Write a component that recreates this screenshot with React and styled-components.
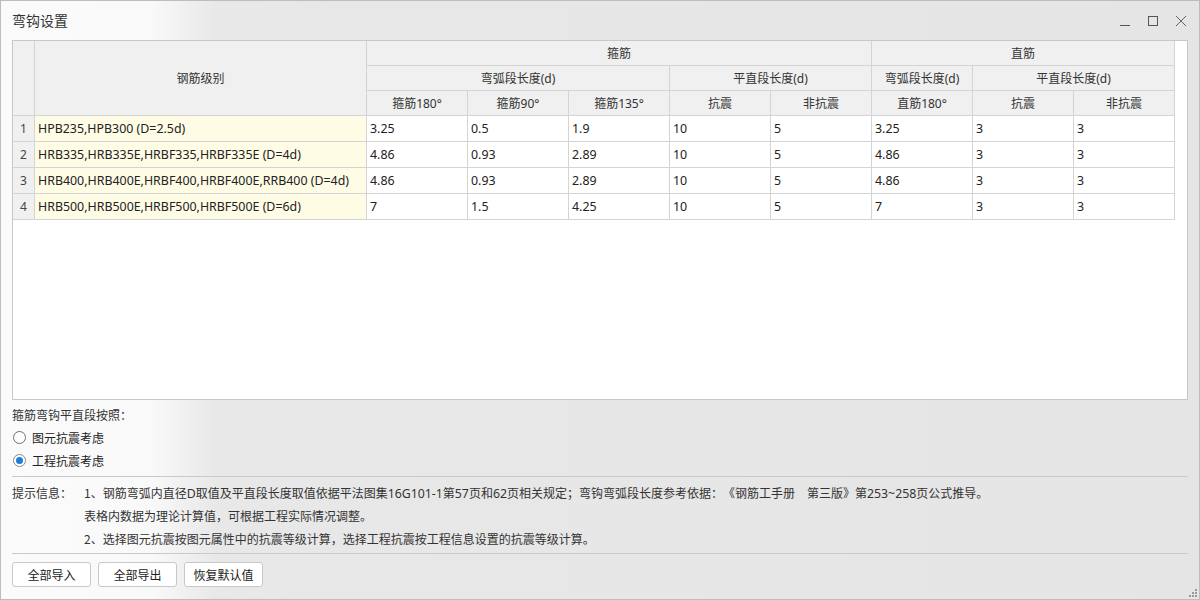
import React from "react";
import styled, { createGlobalStyle } from "styled-components";

const GlobalStyle = createGlobalStyle`
  html, body {
    margin: 0;
    padding: 0;
  }
  body {
    font-family: "Noto Sans", "Noto Sans CJK SC", sans-serif;
    font-size: 12px;
    color: #333;
    text-spacing-trim: space-all;
  }
`;

const Window = styled.div`
  position: relative;
  width: 1200px;
  height: 600px;
  box-sizing: border-box;
  border: 1px solid #bdbdbd;
  padding: 0 11px;
  display: flex;
  flex-direction: column;
  background: linear-gradient(
    90deg,
    #fbfbfb 0,
    #f9f9f9 150px,
    #e8e8e8 215px,
    #e5e5e5 100%
  );
`;

const TitleBar = styled.div`
  height: 39px;
  display: flex;
  align-items: center;
  justify-content: space-between;
`;

const Title = styled.div`
  font-family: "Noto Sans CJK SC", sans-serif;
  font-size: 14px;
  color: #333;
  margin-top: -2px;
`;

const WinControls = styled.div`
  display: flex;
  align-items: center;
  gap: 16px;
  margin-right: 1px;
  svg {
    display: block;
  }
`;

const TableBox = styled.div`
  height: 360px;
  box-sizing: border-box;
  border: 1px solid #c8c8c8;
  background: #fff;
`;

const Grid = styled.div`
  display: grid;
  grid-template-columns: 22px 332px repeat(8, 101px);
  grid-template-rows: 25px 25px 25px repeat(4, 26px);
`;

const HeadCell = styled.div`
  grid-column: span ${(p) => p.$cols || 1};
  grid-row: span ${(p) => p.$rows || 1};
  box-sizing: border-box;
  border-right: 1px solid #d4d4d4;
  border-bottom: 1px solid #d4d4d4;
  background: #f0f0f0;
  display: flex;
  align-items: center;
  justify-content: center;
  color: #333;
  white-space: nowrap;
`;

const NumCell = styled(HeadCell)`
  color: #444;
`;

const Cell = styled.div`
  box-sizing: border-box;
  border-right: 1px solid #d4d4d4;
  border-bottom: 1px solid #d4d4d4;
  background: ${(p) => (p.$level ? "#fffce6" : "#fff")};
  display: flex;
  align-items: center;
  padding-left: 3px;
  font-size: 12.4px;
  color: #222;
  white-space: nowrap;
  overflow: hidden;
`;

const Label = styled.div`
  height: 23px;
  margin-top: 3px;
  display: flex;
  align-items: center;
  font-family: "Noto Sans CJK SC", sans-serif;
  color: #333;
`;

const RadioRow = styled.label`
  height: 23px;
  display: flex;
  align-items: center;
  gap: 6px;
  padding-left: 1px;
  color: #222;
`;

const RadioDot = styled.span`
  width: 13px;
  height: 13px;
  box-sizing: border-box;
  border-radius: 50%;
  border: 1px solid ${(p) => (p.$on ? "#8a8a8a" : "#6e6e6e")};
  background: #fff;
  display: flex;
  align-items: center;
  justify-content: center;
  &::after {
    content: "";
    width: 7px;
    height: 7px;
    border-radius: 50%;
    background: ${(p) => (p.$on ? "#1f7ae0" : "transparent")};
  }
`;

const Divider = styled.div`
  height: 1px;
  background: #c9c9c9;
  margin-top: ${(p) => p.$top}px;
`;

const Tips = styled.div`
  display: grid;
  grid-template-columns: 72px 1fr;
  grid-auto-rows: 23px;
  align-items: center;
  padding-top: 4px;
  font-family: "Noto Sans CJK SC", sans-serif;
  color: #333;
`;

const TipLine = styled.div`
  grid-column: 2;
  white-space: pre;
`;

const Latin = styled.span`
  font-family: "Noto Sans", sans-serif;
  font-size: 12.3px;
`;

const Buttons = styled.div`
  display: flex;
  gap: 7px;
  margin-top: 8px;
`;

const Button = styled.button`
  width: 79px;
  height: 25px;
  box-sizing: border-box;
  border: 1px solid #c8c8c8;
  border-radius: 3px;
  background: #fff;
  font-family: "Noto Sans CJK SC", sans-serif;
  font-size: 12px;
  color: #222;
  padding: 0;
`;

const Grip = styled.svg`
  position: absolute;
  right: 2px;
  bottom: 2px;
`;

const rows = [
  ["HPB235,HPB300 (D=2.5d)", "3.25", "0.5", "1.9", "10", "5", "3.25", "3", "3"],
  ["HRB335,HRB335E,HRBF335,HRBF335E (D=4d)", "4.86", "0.93", "2.89", "10", "5", "4.86", "3", "3"],
  ["HRB400,HRB400E,HRBF400,HRBF400E,RRB400 (D=4d)", "4.86", "0.93", "2.89", "10", "5", "4.86", "3", "3"],
  ["HRB500,HRB500E,HRBF500,HRBF500E (D=6d)", "7", "1.5", "4.25", "10", "5", "7", "3", "3"],
];

const subHeads = ["箍筋180°", "箍筋90°", "箍筋135°", "抗震", "非抗震", "直筋180°", "抗震", "非抗震"];

export default function App() {
  return (
    <>
      <GlobalStyle />
      <Window>
        <TitleBar>
          <Title>弯钩设置</Title>
          <WinControls>
            <svg width="12" height="12" viewBox="0 0 12 12">
              <path d="M1 10.5h10" stroke="#555" strokeWidth="1" />
            </svg>
            <svg width="12" height="12" viewBox="0 0 12 12">
              <rect x="1.5" y="1.5" width="9" height="9" fill="none" stroke="#555" strokeWidth="1" />
            </svg>
            <svg width="12" height="12" viewBox="0 0 12 12">
              <path d="M1 1l10 10M11 1L1 11" stroke="#666" strokeWidth="1" />
            </svg>
          </WinControls>
        </TitleBar>

        <TableBox>
          <Grid>
            <HeadCell $rows={3} />
            <HeadCell $rows={3}>钢筋级别</HeadCell>
            <HeadCell $cols={5}>箍筋</HeadCell>
            <HeadCell $cols={3}>直筋</HeadCell>
            <HeadCell $cols={3}>弯弧段长度(d)</HeadCell>
            <HeadCell $cols={2}>平直段长度(d)</HeadCell>
            <HeadCell>弯弧段长度(d)</HeadCell>
            <HeadCell $cols={2}>平直段长度(d)</HeadCell>
            {subHeads.map((h, i) => (
              <HeadCell key={i}>{h}</HeadCell>
            ))}
            {rows.map((r, i) => (
              <React.Fragment key={i}>
                <NumCell>{i + 1}</NumCell>
                {r.map((v, j) => (
                  <Cell key={j} $level={j === 0}>
                    {v}
                  </Cell>
                ))}
              </React.Fragment>
            ))}
          </Grid>
        </TableBox>

        <Label>箍筋弯钩平直段按照：</Label>
        <RadioRow>
          <RadioDot />
          图元抗震考虑
        </RadioRow>
        <RadioRow>
          <RadioDot $on />
          工程抗震考虑
        </RadioRow>

        <Divider $top={4} />

        <Tips>
          <span>提示信息：</span>
          <TipLine>
            1、钢筋弯弧内直径<Latin>D</Latin>取值及平直段长度取值依据平法图集<Latin>16G101-1</Latin>第<Latin>57</Latin>页和<Latin>62</Latin>页相关规定；弯钩弯弧段长度参考依据：《钢筋工手册　第三版》第<Latin>253~258</Latin>页公式推导。
          </TipLine>
          <TipLine>表格内数据为理论计算值，可根据工程实际情况调整。</TipLine>
          <TipLine>2、选择图元抗震按图元属性中的抗震等级计算，选择工程抗震按工程信息设置的抗震等级计算。</TipLine>
        </Tips>

        <Divider $top={3} />

        <Buttons>
          <Button>全部导入</Button>
          <Button>全部导出</Button>
          <Button>恢复默认值</Button>
        </Buttons>

        <Grip width="8" height="8" viewBox="0 0 8 8">
          <rect x="6" y="0" width="2" height="2" fill="#999" />
          <rect x="3" y="3" width="2" height="2" fill="#999" />
          <rect x="6" y="3" width="2" height="2" fill="#999" />
          <rect x="0" y="6" width="2" height="2" fill="#999" />
          <rect x="3" y="6" width="2" height="2" fill="#999" />
          <rect x="6" y="6" width="2" height="2" fill="#999" />
        </Grip>
      </Window>
    </>
  );
}
